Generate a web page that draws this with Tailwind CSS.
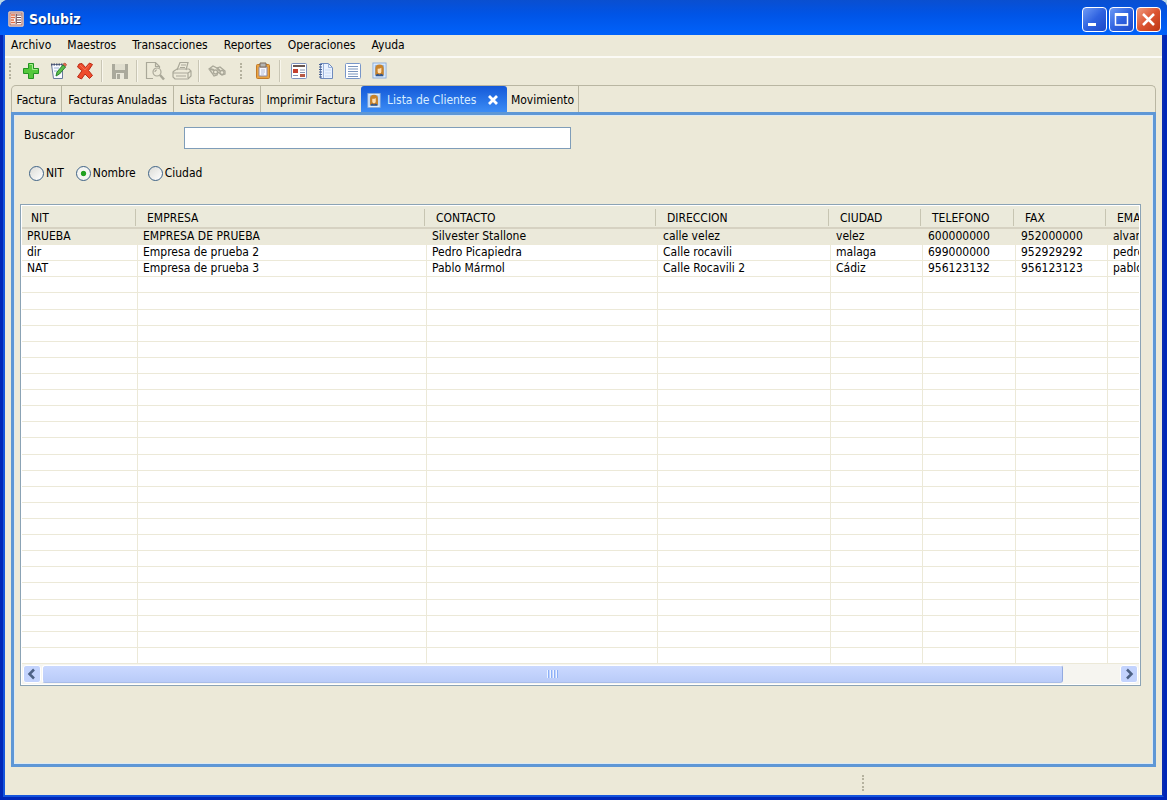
<!DOCTYPE html>
<html lang="es">
<head>
<meta charset="utf-8">
<title>Solubiz</title>
<script src="https://cdn.jsdelivr.net/npm/@tailwindcss/browser@4"></script>
</head>
<body class="h-screen overflow-hidden bg-[#b9d8e8] font-['DejaVu_Sans_Condensed','DejaVu_Sans',sans-serif] text-[12px] leading-4 text-black">
<svg class="hidden">
  <symbol id="person" viewBox="0 0 16 18"><rect x="1" y="1" width="14" height="16" fill="#dcecff" stroke="#8bacd8"/><rect x="3" y="3" width="10" height="12" fill="#94bce9"/><path d="M3.500 14V7q0-4.500 4.500-4.500t4.500 4.500v7z" fill="#c9832a"/><path d="M6 7q3 0 4-1v4q0 2-2 2t-2-2z" fill="#ffe0b5"/><path d="M4 15q0-2 2-2.500l2 1 2-1q2 .5 2 2.500z" fill="#31558b"/></symbol>
</svg>
<div class="flex h-full flex-col overflow-hidden rounded-t-lg bg-[#0027b8]">
  <header class="flex h-[35px] shrink-0 items-center gap-[5px] bg-linear-to-b from-[#0a4fd0] via-[#0054e6] via-40% to-[#0062fb] pr-[6px] pl-2 pt-[3px]">
    <svg class="size-4" viewBox="0 0 16 16"><rect x=".5" y=".5" width="15" height="15" rx="1.5" fill="#f3ece8" stroke="#b7aebc"/><rect x="2" y="2" width="12" height="12" fill="#fff" stroke="#a65f56"/><path d="M3 4h4M3 6.500h4M3 9h3M3 11.500h4" stroke="#e06b42" stroke-width="1.500"/><path d="M8.500 4h5M9 6.500h4M8 9h5M9 11.500h4M8.200 3v10" stroke="#6f4b50" stroke-width="1.200"/></svg>
    <h1 class="flex-1 text-[14px] font-bold text-white [text-shadow:1px_1px_1px_#062b7c]">Solubiz</h1>
    <div class="flex gap-[2px]">
      <button aria-label="Minimizar" class="size-[25px] rounded-[4px] border border-white bg-linear-to-br from-[#6f9af5] via-[#2f62e0] to-[#1d48c8]"><svg viewBox="0 0 23 23"><path d="M5 15h8v3H5z" fill="#fff"/></svg></button>
      <button aria-label="Maximizar" class="size-[25px] rounded-[4px] border border-white bg-linear-to-br from-[#6f9af5] via-[#2f62e0] to-[#1d48c8]"><svg viewBox="0 0 23 23"><path d="M5.500 6h12v11h-12z" fill="none" stroke="#fff" stroke-width="1.500"/><path d="M5 5h13v3H5z" fill="#fff"/></svg></button>
      <button aria-label="Cerrar" class="size-[25px] rounded-[4px] border border-white bg-linear-to-br from-[#ee9a7e] via-[#dc5430] to-[#bd3514]"><svg viewBox="0 0 23 23"><path d="m6 6 11 11M17 6 6 17" stroke="#fff" stroke-width="2.500"/></svg></button>
    </div>
  </header>
  <div class="mx-[3px] mb-[3px] flex min-h-0 flex-1 flex-col border-2 border-t-0 border-[#1555dd] border-r-[#0a2bb0] bg-[#ece9d8]">
    <nav class="flex h-[21px] shrink-0 items-center gap-4 pb-px pl-[6px]">
      <button>Archivo</button><button>Maestros</button><button>Transacciones</button><button>Reportes</button><button>Operaciones</button><button>Ayuda</button>
    </nav>
    <div class="flex h-[29px] shrink-0 items-center border-t-2 border-[#fbfaf5] pb-[2px] pl-1">
      <span class="mr-[5px] h-4 w-[3px] border-l-2 border-dotted border-[#b5b29f]"></span>
      <button aria-label="Nuevo" class="flex w-[27px] justify-center"><svg class="size-[18px]" viewBox="0 0 18 18"><path d="M6.500 1.500h5v5h5v5h-5v5h-5v-5h-5v-5h5z" fill="#55c83c" stroke="#239322" stroke-linejoin="round"/><path d="M7.500 2.500h3v5h5" fill="none" stroke="#a8ed8f"/></svg></button>
      <button aria-label="Editar" class="flex w-[27px] justify-center"><svg class="size-[18px]" viewBox="0 0 18 18"><path d="M2.500 2.500h11v14h-9z" fill="#f8faff" stroke="#69799d"/><path d="M2 2.500h12" stroke="#47516d" stroke-width="2" stroke-dasharray="1.500 1"/><path d="M5 6h5M5 9h3" stroke="#9eb2d8"/><path d="m7 14 1-4 6-7 2.500 2-6 7z" fill="#5cbd49" stroke="#278030"/><path d="m14 2 2-1 1.500 1.500-1 2z" fill="#e66b4f" stroke="#a53d29" stroke-width=".6"/></svg></button>
      <button aria-label="Eliminar" class="flex w-[27px] justify-center"><svg class="size-[18px]" viewBox="0 0 18 18"><path d="m3 2 3-.5 3.500 4 4-4.500 3 1.500-4 6 4 5-3 3L9 12l-3.500 5-4-2L6 8.700 1.500 5z" fill="#ee4b2b" stroke="#b92b17" stroke-linejoin="round"/><path d="m4 3 5 5 4-5" fill="none" stroke="#f4775a" stroke-width=".8"/></svg></button>
      <span class="mx-[3px] h-[22px] w-[2px] border-l border-[#c9c6b5] bg-[#f8f6ec]"></span>
      <button aria-label="Guardar" class="flex w-[27px] justify-center"><svg class="size-[18px]" viewBox="0 0 18 18"><path d="M1 2h3v6h10V2h3v15H1z" fill="#aaa99c"/><path d="M4 2h10v6H4z" fill="#e0decf"/><path d="M5 11h8v6H5z" fill="#e9e7da"/><path d="M6 12h3v5H6z" fill="#aaa99c"/></svg></button>
      <span class="mx-[3px] h-[22px] w-[2px] border-l border-[#c9c6b5] bg-[#f8f6ec]"></span>
      <button aria-label="Vista previa" class="flex w-[27px] justify-center"><svg class="size-5" viewBox="0 0 20 20" fill="none" stroke="#aaa899" stroke-width="1.200"><path d="M8 17.500H1.500v-16h9l4 4V7M10.500 1.500v4h4"/><circle cx="12" cy="11" r="4"/><path d="m15 14 4 4.500" stroke-width="2.500"/><path d="M10 11q0-2 2-2"/></svg></button>
      <button aria-label="Imprimir" class="flex w-[27px] justify-center"><svg class="size-5" viewBox="0 0 20 20" fill="none" stroke="#aaa899" stroke-width="1.200"><path d="m5 9 3-7.500h8L14 9M9 4h5M8 6.500h5"/><path d="m2 10 3-2h12l2 2v5l-3 3H3l-2-2v-5zM1.500 12H16l3-2M4 15h10M16 12v5"/></svg></button>
      <span class="mx-[3px] h-[22px] w-[2px] border-l border-[#c9c6b5] bg-[#f8f6ec]"></span>
      <button aria-label="Buscar" class="flex w-[27px] justify-center"><svg class="size-[18px]" viewBox="0 0 18 18" fill="none" stroke="#aaa899" stroke-width="1.300"><path d="m1 7 4-3 4 2 3-1 5 4v3l-3 1-4-3-1 3-3 1-2-3z"/><circle cx="7.500" cy="10" r="2"/><circle cx="14" cy="10.500" r="2"/><path d="m2 7 4 1M9 6l3 3" stroke-width="2"/></svg></button>
      <span class="mr-[6px] ml-[10px] h-4 w-[3px] border-l-2 border-dotted border-[#b5b29f]"></span>
      <button aria-label="Portapapeles" class="flex w-[27px] justify-center"><svg class="size-[18px]" viewBox="0 0 18 18"><rect x="2.500" y="2.500" width="13" height="14" rx="1" fill="#e9a341" stroke="#c37a27"/><path d="M5 5h8v9H5z" fill="#f7f8ff" stroke="#8d8aa4"/><path d="M6 1h6v4H6z" fill="#b5b5b4" stroke="#7e6a58"/><path d="M7 8h4M7 10h4M7 12h3" stroke="#b6bdd8"/></svg></button>
      <span class="mr-[4px] ml-[3px] h-[22px] w-[2px] border-l border-[#c9c6b5] bg-[#f8f6ec]"></span>
      <button aria-label="Factura" class="flex w-[27px] justify-center"><svg class="size-[18px]" viewBox="0 0 18 18"><rect x="1.500" y="1.500" width="15" height="15" rx="1" fill="#fff" stroke="#7c91bd"/><path d="M3 4h12" stroke="#6a5650" stroke-width="2"/><path d="M3 7h5v4H3z" fill="#c43f2d"/><path d="M10 8h5M10 10.500h5M3 13.500h5" stroke="#8793ad"/><path d="M10 12h5v3h-5z" fill="#b95a45"/></svg></button>
      <button aria-label="Cuaderno" class="flex w-[27px] justify-center"><svg class="size-[18px]" viewBox="0 0 18 18"><path d="M3.500 1.500h8l4 4v11h-12z" fill="#eaf2ff" stroke="#6f8bbd"/><path d="M11.500 1.500v4h4M6.500 2v14" fill="none" stroke="#9ab2da"/><path d="M3.500 2v14" stroke="#475f91" stroke-width="3" stroke-dasharray="1 1.500"/><path d="M8 8h6M8 11h6M8 14h6" stroke="#c9dbf5"/></svg></button>
      <button aria-label="Lista" class="flex w-[27px] justify-center"><svg class="size-[18px]" viewBox="0 0 18 18"><rect x="1.500" y="1.500" width="15" height="15" rx="1" fill="#fff" stroke="#7896c9"/><path d="M4 4.500h10M4 7h10M4 9.500h10M4 12h10M4 14.500h10" stroke="#7994bd"/></svg></button>
      <button aria-label="Clientes" class="flex w-[27px] justify-center"><svg class="h-[17px] w-[15px]"><use href="#person"/></svg></button>
    </div>
    <main class="mx-[6px] mb-[28px] flex min-h-0 flex-1 flex-col">
      <div role="tablist" class="flex h-[27px] shrink-0 rounded-t-[5px] border border-b-0 border-[#b9b6a2] [&_button]:pt-[2px]">
        <button role="tab" class="w-[50px] border-r border-[#b9b6a2] whitespace-nowrap">Factura</button>
        <button role="tab" class="w-[112px] border-r border-[#b9b6a2] whitespace-nowrap">Facturas Anuladas</button>
        <button role="tab" class="w-[87px] border-r border-[#b9b6a2] whitespace-nowrap">Lista Facturas</button>
        <button role="tab" class="w-[100px] whitespace-nowrap">Imprimir Factura</button>
        <div class="flex w-[146px] items-center rounded-t-[3px] bg-linear-to-b from-[#1458d8] to-[#3c8cf5] pl-[6px] text-[#d9edff]">
          <button role="tab" aria-selected="true" class="flex items-center gap-[6px] whitespace-nowrap"><svg class="h-[17px] w-[14px]"><use href="#person"/></svg>Lista de Clientes</button>
          <button aria-label="Cerrar pestaña" class="mr-2 ml-auto"><svg class="size-[12px]" viewBox="0 0 12 12"><path d="m2 2 8 8M10 2l-8 8" stroke="#fff" stroke-width="2.800"/></svg></button>
        </div>
        <button role="tab" class="w-[72px] border-r border-[#b9b6a2] whitespace-nowrap">Movimiento</button>
      </div>
      <section class="flex min-h-0 flex-1 flex-col border-3 border-[#5e97d6] px-[6px] pb-[78px] inset-shadow-[0_0_0_1px_#dce9f3]">
        <div class="flex pt-[12px] pl-1">
          <label for="buscador" class="w-[160px]">Buscador</label>
          <input id="buscador" type="text" class="h-[22px] w-[387px] border border-[#7f9db9] bg-white px-1 outline-none">
        </div>
        <div class="mt-4 flex gap-3 pl-[9px]">
          <label class="flex items-center gap-[2px]"><input type="radio" name="campo" class="size-[15px] appearance-none rounded-full border border-[#3f6387] bg-linear-to-br from-[#dcdcd7] to-white checked:bg-[radial-gradient(circle,#21a121_24%,#f4f5f2_34%)]">NIT</label>
          <label class="flex items-center gap-[2px]"><input type="radio" name="campo" checked class="size-[15px] appearance-none rounded-full border border-[#3f6387] bg-linear-to-br from-[#dcdcd7] to-white checked:bg-[radial-gradient(circle,#21a121_24%,#f4f5f2_34%)]">Nombre</label>
          <label class="flex items-center gap-[2px]"><input type="radio" name="campo" class="size-[15px] appearance-none rounded-full border border-[#3f6387] bg-linear-to-br from-[#dcdcd7] to-white checked:bg-[radial-gradient(circle,#21a121_24%,#f4f5f2_34%)]">Ciudad</label>
        </div>
        <div class="mt-[23px] mr-[6px] flex min-h-0 flex-1 flex-col border border-[#8ba3b5] bg-white p-px">
          <div class="min-h-0 flex-1 overflow-hidden">
            <table class="h-full w-[1178px] table-fixed border-separate border-spacing-0 text-left whitespace-nowrap [&_td]:h-4 [&_td]:overflow-hidden [&_td]:border-r [&_td]:border-b [&_td]:border-[#ece9d8] [&_td]:p-0 [&_td]:pl-[5px] [&_td]:leading-[15px] [&_th]:p-0 [&_th]:font-normal">
              <colgroup><col class="w-[116px]"><col class="w-[289px]"><col class="w-[231px]"><col class="w-[173px]"><col class="w-[92px]"><col class="w-[93px]"><col class="w-[92px]"><col></colgroup>
              <thead class="[&_div]:mr-[2px] [&_div]:border-r [&_div]:border-[#c7c5b2] [&_div]:pt-px [&_div]:pl-[9px] [&_th]:h-[23px] [&_th]:border-b-2 [&_th]:border-[#d6d2c2] [&_th]:bg-[#ebeadb] [&_th]:pt-px">
                <tr>
                  <th><div>NIT</div></th><th><div>EMPRESA</div></th><th><div>CONTACTO</div></th><th><div>DIRECCION</div></th><th><div>CIUDAD</div></th><th><div>TELEFONO</div></th><th><div>FAX</div></th><th><div>EMAIL</div></th>
                </tr>
              </thead>
              <tbody id="filas">
                <tr class="bg-[#ebe9da]"><td>PRUEBA</td><td>EMPRESA DE PRUEBA</td><td>Silvester Stallone</td><td>calle velez</td><td>velez</td><td>600000000</td><td>952000000</td><td>alvaro</td></tr>
                <tr><td>dir</td><td>Empresa de prueba 2</td><td>Pedro Picapiedra</td><td>Calle rocavili</td><td>malaga</td><td>699000000</td><td>952929292</td><td>pedro</td></tr>
                <tr><td>NAT</td><td>Empresa de prueba 3</td><td>Pablo Mármol</td><td>Calle Rocavili 2</td><td>Cádiz</td><td>956123132</td><td>956123123</td><td>pablo</td></tr>
              </tbody>
            </table>
          </div>
          <div class="flex h-[20px] shrink-0 items-center gap-px bg-[#f6f5f0] p-px">
            <button aria-label="Desplazar a la izquierda" class="flex size-[18px] items-center justify-center rounded-[3px] border border-white bg-[#c3d3fd]"><svg class="size-[12px]" viewBox="0 0 12 12" fill="none" stroke="#4d6185" stroke-width="2.500"><path d="M8 1.500 3.500 6 8 10.500"/></svg></button>
            <div class="flex h-[18px] flex-1">
              <div class="flex w-[94.8%] items-center justify-center gap-px rounded-[3px] border border-white border-r-[#93aae0] border-b-[#a9bde8] bg-linear-to-b from-[#cbd9ff] to-[#b9cbf8]">
                <i class="h-[8px] w-[2px] border-l border-[#eef4ff] bg-[#8cb0f8]"></i><i class="h-[8px] w-[2px] border-l border-[#eef4ff] bg-[#8cb0f8]"></i><i class="h-[8px] w-[2px] border-l border-[#eef4ff] bg-[#8cb0f8]"></i><i class="h-[8px] w-[2px] border-l border-[#eef4ff] bg-[#8cb0f8]"></i>
              </div>
            </div>
            <button aria-label="Desplazar a la derecha" class="flex size-[18px] items-center justify-center rounded-[3px] border border-white bg-[#c3d3fd]"><svg class="size-[12px]" viewBox="0 0 12 12" fill="none" stroke="#4d6185" stroke-width="2.500"><path d="M4 1.500 8.500 6 4 10.500"/></svg></button>
          </div>
        </div>
      </section>
    </main>
    <footer class="-mt-[24px] flex h-[24px] shrink-0 items-center justify-end pr-[297px]"><span class="h-4 w-[3px] border-l-2 border-dotted border-[#b5b29f]"></span></footer>
  </div>
</div>
<script>
  const filas = document.getElementById('filas');
  for (let i = 0; i < 24; i++) {
    const fila = filas.insertRow();
    for (let c = 0; c < 8; c++) fila.insertCell();
  }
</script>
</body>
</html>
